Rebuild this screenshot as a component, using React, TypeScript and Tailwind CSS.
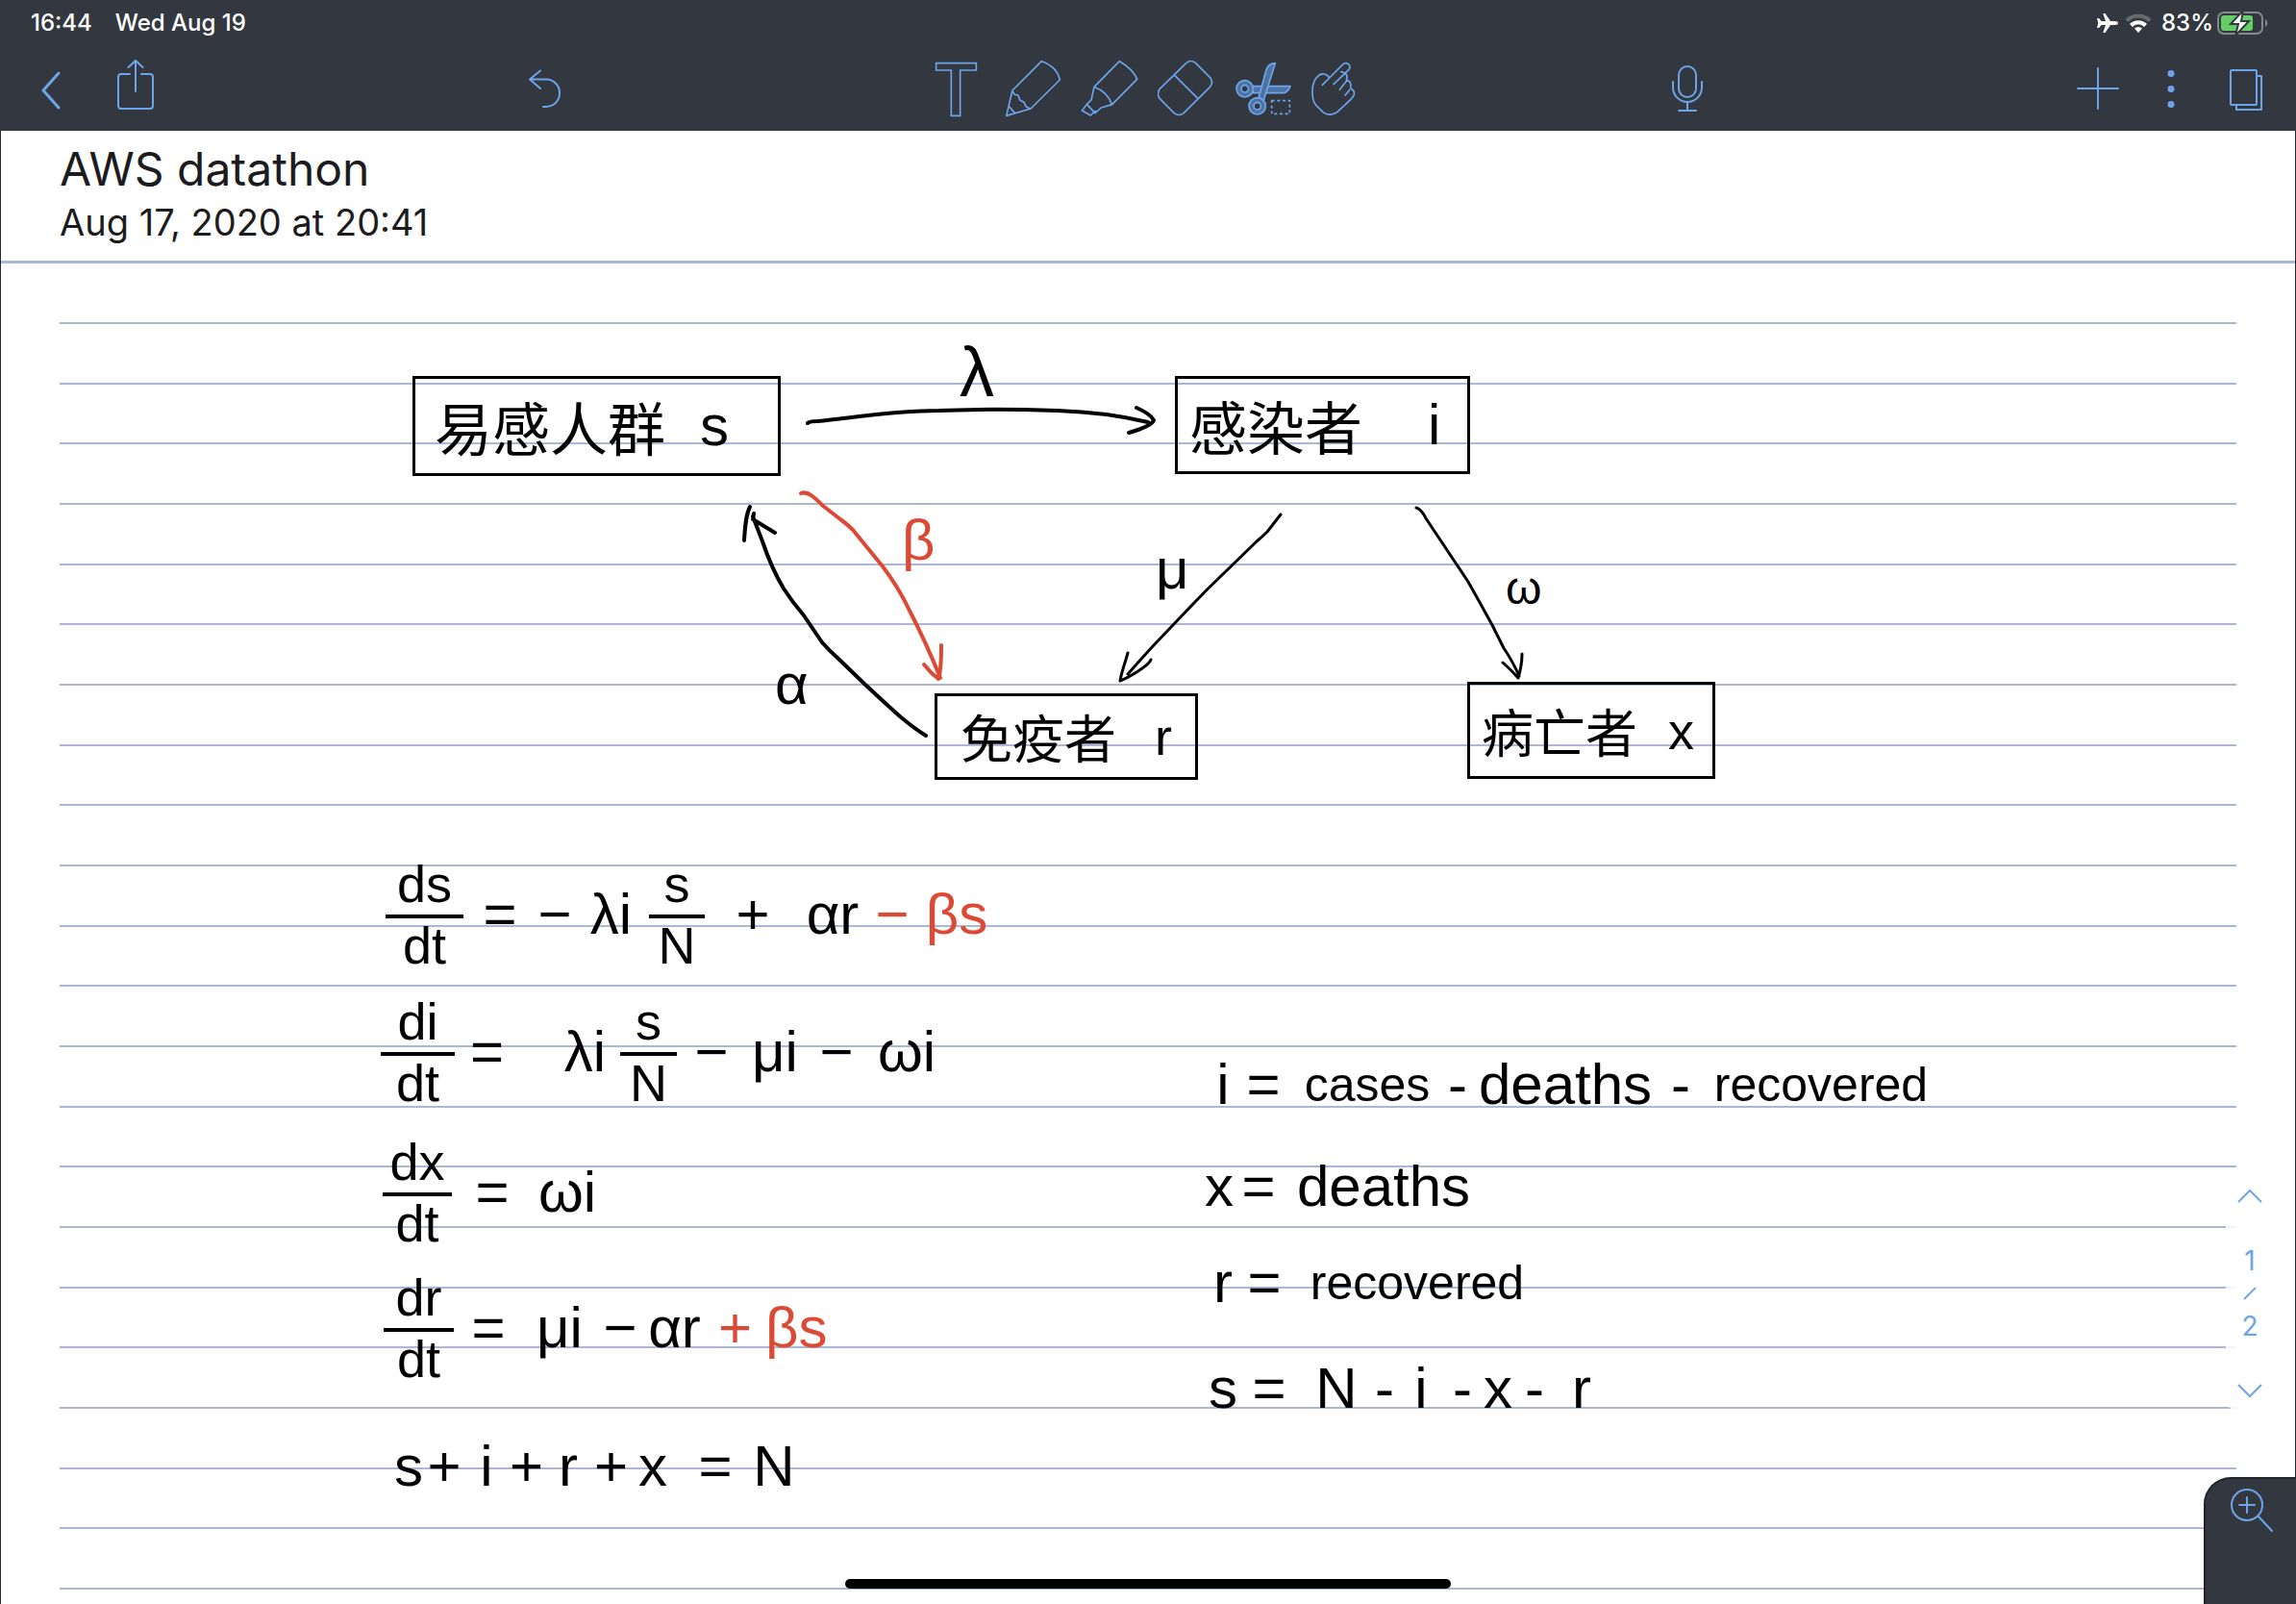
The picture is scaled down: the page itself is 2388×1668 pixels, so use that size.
import type { ReactNode } from "react";

const BLUE = "#6ea4ea";

function Icon({ box, width, label, children }: { box: string; width: string; label: string; children: ReactNode }) {
  return (
    <button type="button" aria-label={label} className="block shrink-0">
      <svg viewBox={box} className={width} fill="none" stroke={BLUE} strokeWidth={2} strokeLinecap="round" strokeLinejoin="round">
        {children}
      </svg>
    </button>
  );
}

function Tool({ box, label, children }: { box: string; label: string; children: ReactNode }) {
  return (
    <button type="button" aria-label={label} className="block shrink-0">
      <svg viewBox={box} className="h-15 w-15" fill="none" stroke={BLUE} strokeWidth={5} strokeLinecap="round" strokeLinejoin="round">
        {children}
      </svg>
    </button>
  );
}

function StatusBar() {
  return (
    <div className="flex h-12 items-center pr-7 pl-8 text-2xl leading-6 font-medium text-white">
      <span>16:44</span>
      <span className="ml-6">Wed Aug 19</span>
      <div className="ml-auto flex items-center">
        <svg viewBox="0 0 24 22" className="h-[22px] w-6" fill="#fff">
          <path d="M23 11c0-1.200-1.600-2-3.200-2H15L9.500 1H7.300L10 9H5.500L3 6H1l1.300 5L1 16h2l2.500-3H10L7.300 21h2.200L15 13h4.800c1.600 0 3.200-.8 3.200-2z" />
        </svg>
        <svg viewBox="0 0 28 20" className="ml-1.5 h-5 w-7" fill="none" strokeWidth={4}>
          <path d="M2 7.500a17 17 0 0 1 24 0" stroke="#666a72" />
          <path d="M6.500 12.500a10.500 10.500 0 0 1 15 0" stroke="#fff" />
          <path d="M14 20l-4-4.500a6 6 0 0 1 8 0z" fill="#fff" />
        </svg>
        <span className="ml-2.5">83%</span>
        <svg viewBox="0 0 54 24" className="ml-1 h-6 w-[54px]">
          <rect x="1" y="1" width="46" height="22" rx="6" fill="none" stroke="#85888e" strokeWidth="2" />
          <rect x="4" y="4" width="33" height="16" rx="3" fill="#65cf65" />
          <path d="M50 8c3 1.500 3 6.500 0 8z" fill="#85888e" />
          <path d="M27 -1L14 13h8l-3 12 14-15h-8z" fill="#fff" stroke="#333740" strokeWidth="2" />
        </svg>
      </div>
    </div>
  );
}

function Toolbar() {
  return (
    <div className="grid h-22 grid-cols-[1fr_auto_1fr] items-center">
      <div className="flex items-center pl-8">
        <Icon box="32 62 40 60" width="h-15 w-10" label="Back">
          <path d="M61 76L45 94l16 18" strokeWidth={3} />
        </Icon>
        <div className="ml-10">
          <Icon box="112 62 60 60" width="h-15 w-15" label="Share">
            <path d="M135 77h-9q-3 0-3 3v30q0 3 3 3h30q3 0 3-3V80q0-3-3-3h-9M141 95V63M133.500 70l7.500-7 7.500 7" />
          </Icon>
        </div>
        <div className="mr-[370px] ml-auto">
          <Icon box="540 62 54 60" width="h-15 w-[54px]" label="Undo">
            <path d="M562 73.500L551 82.500l11 9.500M552 82.500h16a14 14 0 0 1 14 14.500 14 14 0 0 1-14 14h-3" />
          </Icon>
        </div>
      </div>
      <div className="flex gap-5">
        <Tool box="72 66 180 180" label="Text">
          <path d="M101 77h125v22h-50v142h-28V99h-47z" strokeLinejoin="miter" />
        </Tool>
        <Tool box="312 66 180 180" label="Pen">
          <path d="M430 71L339 162 320 241 396 219 487 129Q478 88 430 71zM339 164l7 11 11 2 5 15 13 7 6 13 14 7M328 212l18 20" />
        </Tool>
        <Tool box="552 66 180 180" label="Highlighter">
          <path d="M673 71L594 151l-9 41-14 13 26 28 19-17 34-10 78-79Q716 96 673 71zM594 151q41 16 55 54M571 206l-15 19 27 15 14-14" />
        </Tool>
        <Tool box="792 66 180 180" label="Eraser">
          <path d="M881 77q15-13 30 0l44 44q13 16 0 31l-81 80q-15 13-31 0l-44-44q-12-15 0-31zM846 116l69 69" />
        </Tool>
        <Tool box="1032 66 180 180" label="Select and cut">
          <path fill="#4f73a3" d="M1090 149H1206q-8 20-21 21H1090z" />
          <path fill="#4f73a3" d="M1159 77q-24 2-29 24l-23 84 16 8z" />
          <circle cx="1064" cy="157" r="19" stroke="#4f73a3" strokeWidth="16" />
          <circle cx="1103" cy="211" r="19" stroke="#4f73a3" strokeWidth="16" />
          <circle cx="1064" cy="157" r="26" />
          <circle cx="1103" cy="211" r="26" />
          <circle cx="1064" cy="157" r="11" />
          <circle cx="1103" cy="211" r="11" />
          <path d="M1148 194h56v41h-56z" strokeDasharray="9 8" strokeLinecap="butt" />
        </Tool>
        <Tool box="1272 66 180 180" label="Hand">
          <path d="M1306 145l22-22c-8-14-24-16-34-7-13 11-18 25-19 44 0 27 2 37 12 49l21 21c14 11 33 9 45-1l44-41c12-12 12-25-3-33 4-15-4-25-13-24 6-16-2-26-16-27M1328 123l41-41c12-12 30 2 20 15l-48 46M1360 160l22-28M1377 177l14-16" />
        </Tool>
      </div>
      <div className="flex items-center gap-7 pr-[22px]">
        <div className="mr-auto ml-[301px]">
          <Icon box="1725 62 60 60" width="h-15 w-15" label="Record">
            <rect x="1746" y="69" width="18" height="32" rx="9" />
            <path d="M1740 85v6a15 15 0 0 0 30 0v-6M1755 107v8M1746 115h18" />
          </Icon>
        </div>
        <Icon box="2150 62 60 60" width="h-15 w-15" label="Add">
          <path d="M2182 71v42M2161 92h42" />
        </Icon>
        <Icon box="2238 62 40 60" width="h-15 w-10" label="More">
          <g fill={BLUE} stroke="none">
            <circle cx="2258" cy="76.500" r="3.500" />
            <circle cx="2258" cy="92.500" r="3.500" />
            <circle cx="2258" cy="108.500" r="3.500" />
          </g>
        </Icon>
        <Icon box="2306 62 60 60" width="h-15 w-15" label="Pages">
          <rect x="2320" y="73" width="27" height="36" rx="1" />
          <path d="M2347 79h5v35h-26v-5" />
        </Icon>
      </div>
    </div>
  );
}

function Frac({ top, bottom }: { top: string; bottom: string }) {
  return (
    <span className="flex flex-col text-center text-[54px] leading-14">
      <span className="border-b-4 border-black pb-1">{top}</span>
      <span>{bottom}</span>
    </span>
  );
}

function Row({ at, children }: { at: string; children: ReactNode }) {
  return <div className={"absolute grid items-center text-center leading-15 whitespace-nowrap " + at}>{children}</div>;
}

const RED = "text-[#dc4a35]";

function Node({ at, text, symbol }: { at: string; text: string; symbol: string }) {
  return (
    <div className={"absolute flex items-center border-3 border-black leading-15 whitespace-nowrap " + at}>
      <span className="font-['Noto_Sans_CJK_SC',sans-serif]">{text}</span>
      <span>{symbol}</span>
    </div>
  );
}

function Ink() {
  return (
    <div className="absolute inset-0 font-['Liberation_Sans',sans-serif] text-6xl text-black">
      <svg viewBox="0 0 2388 1668" className="absolute top-0 left-0 h-[1668px] w-[2388px]" fill="none" stroke="#000" strokeWidth={4} strokeLinecap="round" strokeLinejoin="round">
        <path d="M840 440Q842 438 850 438C890 434 930 427 976 427C1020 425 1070 426 1100 427C1130 428 1165 432 1194 439M1182 424Q1196 430 1200 437Q1198 443 1174 450" />
        <path d="M963 765Q950 757 936 745Q918 729 900 712L872 685Q862 676 855 668L836 640Q824 626 815 612Q802 590 793 563L783 537M774 562C775 545 776 535 780 527M784 534L783 540L806 554" />
        <path d="M1332 535L1318 553Q1313 558 1307 563L1272 597Q1256 612 1240 629L1199 672Q1188 684 1173 701M1173 679C1170 690 1166 700 1165 708C1175 704 1195 692 1197 686" strokeWidth={3} />
        <path d="M1473 528Q1478 529 1483 539L1499 563L1527 605Q1540 628 1552 650L1564 674Q1573 687 1580 703M1563 689Q1572 697 1579 705Q1583 692 1583 680" strokeWidth={3} />
        <path d="M833 513C840 510 848 518 856 526L874 540Q881 545 887 551L918 589Q934 610 945 633C960 662 970 685 978 705M979 671C979 685 978 700 976 706Q968 700 961 691" stroke="#dc4a35" />
      </svg>

      <Node at="top-[391px] left-[429px] h-[104px] w-[383px] gap-9 pl-5" text="易感人群" symbol="s" />
      <Node at="top-[391px] left-[1222px] h-[102px] w-[307px] gap-17 pl-3" text="感染者" symbol="i" />
      <Node at="top-[721px] left-[972px] h-[90px] w-[274px] gap-10 pl-6 text-[54px]" text="免疫者" symbol="r" />
      <Node at="top-[709px] left-[1526px] h-[101px] w-[258px] gap-8 pl-3 text-[54px]" text="病亡者" symbol="x" />

      <span className="absolute top-[357px] left-[998px] text-7xl leading-15">λ</span>
      <span className={"absolute top-[532px] left-[938px] text-6xl leading-15 " + RED}>β</span>
      <span className="absolute top-[682px] left-[806px] leading-15">α</span>
      <span className="absolute top-[562px] left-[1202px] text-6xl leading-15">μ</span>
      <span className="absolute top-[582px] left-[1566px] text-5xl leading-15">ω</span>

      <Row at="top-[891px] left-[401px] grid-cols-[81px_76px_38px_79px_58px_100px_66px_58px_76px]">
        <Frac top="ds" bottom="dt" />
        <span>=</span>
        <span>−</span>
        <span>λi</span>
        <Frac top="s" bottom="N" />
        <span>+</span>
        <span>αr</span>
        <span className={RED}>−</span>
        <span className={RED}>βs</span>
      </Row>
      <Row at="top-[1034px] left-[396px] grid-cols-[77px_67px_105px_59px_72px_60px_68px_78px]">
        <Frac top="di" bottom="dt" />
        <span>=</span>
        <span className="pl-8">λi</span>
        <Frac top="s" bottom="N" />
        <span>−</span>
        <span>μi</span>
        <span>−</span>
        <span>ωi</span>
      </Row>
      <Row at="top-[1180px] left-[398px] grid-cols-[72px_84px_72px]">
        <Frac top="dx" bottom="dt" />
        <span>=</span>
        <span>ωi</span>
      </Row>
      <Row at="top-[1321px] left-[399px] grid-cols-[73px_72px_76px_50px_63px_63px_40px]">
        <Frac top="dr" bottom="dt" />
        <span>=</span>
        <span>μi</span>
        <span>−</span>
        <span>αr</span>
        <span className={RED}>+</span>
        <span className={RED}>βs</span>
      </Row>
      <Row at="top-[1495px] left-[408px] grid-cols-[34px_40px_48px_34px_54px_32px_58px_72px_50px]">
        <span>s</span>
        <span>+</span>
        <span>i</span>
        <span>+</span>
        <span>r</span>
        <span>+</span>
        <span>x</span>
        <span>=</span>
        <span>N</span>
      </Row>

      <Row at="top-[1098px] left-[1254px] grid-cols-[36px_48px_168px_18px_208px_32px_260px]">
        <span>i</span>
        <span>=</span>
        <span className="text-[50px]">cases</span>
        <span>-</span>
        <span>deaths</span>
        <span>-</span>
        <span className="text-[50px]">recovered</span>
      </Row>
      <Row at="top-[1204px] left-[1250px] grid-cols-[36px_46px_214px]">
        <span>x</span>
        <span>=</span>
        <span>deaths</span>
      </Row>
      <Row at="top-[1304px] left-[1254px] grid-cols-[36px_50px_268px]">
        <span>r</span>
        <span>=</span>
        <span className="text-[50px]">recovered</span>
      </Row>
      <Row at="top-[1414px] left-[1254px] grid-cols-[36px_60px_80px_16px_64px_22px_52px_24px_74px]">
        <span>s</span>
        <span>=</span>
        <span>N</span>
        <span>-</span>
        <span>i</span>
        <span>-</span>
        <span>x</span>
        <span>-</span>
        <span>r</span>
      </Row>
    </div>
  );
}

function PageNav() {
  return (
    <nav aria-label="Pages" className="absolute top-[1219px] right-[23px] flex h-[248px] w-[50px] flex-col items-center rounded-xl bg-white/85 pt-4 pb-3 text-[28px] leading-9 text-[#6ea4ea]">
      <button type="button" aria-label="Previous page">
        <svg viewBox="0 0 28 18" className="h-[18px] w-7" fill="none" stroke={BLUE} strokeWidth={2}>
          <path d="M2 15L14 3l12 12" />
        </svg>
      </button>
      <span className="mt-10">1</span>
      <svg viewBox="0 0 16 16" className="mt-2 h-4 w-4" fill="none" stroke={BLUE} strokeWidth={2}>
        <path d="M2 14L14 2" />
      </svg>
      <span className="mt-2">2</span>
      <button type="button" aria-label="Next page" className="mt-auto">
        <svg viewBox="0 0 28 18" className="h-[18px] w-7" fill="none" stroke={BLUE} strokeWidth={2}>
          <path d="M2 3l12 12L26 3" />
        </svg>
      </button>
    </nav>
  );
}

const rules = Array.from({ length: 21 }, (_, i) => i);

export default function App() {
  return (
    <div className="relative flex min-h-screen flex-col overflow-hidden bg-white font-['Inter',sans-serif]">
      <header className="bg-[#333740]">
        <StatusBar />
        <Toolbar />
      </header>
      <main className="flex-1 border-x border-[#24272c]">
        <div className="border-b-3 border-[#a9b8d6] pt-3 pb-4 pl-[61px] text-[#1c1c1e]">
          <h1 className="text-5xl leading-14">AWS datathon</h1>
          <p className="mt-[3px] text-[38px] leading-12">Aug 17, 2020 at 20:41</p>
        </div>
        <div className="mr-[61px] ml-[61px] grid grid-rows-[63px_1316px]">
          <div className="border-b-2 border-[#a9b8d6]" />
          <div className="grid auto-rows-fr">
            {rules.map((i) => (
              <div key={i} className="border-b-2 border-[#a9b8d6]" />
            ))}
          </div>
        </div>
      </main>
      <Ink />
      <PageNav />
      <div className="absolute right-0 bottom-0 h-[132px] w-24 rounded-tl-[28px] border-t-2 border-l-2 border-[#202429] bg-[#333740] pt-2.5 pl-6">
        <button type="button" aria-label="Zoom in">
          <svg viewBox="0 0 48 48" className="h-12 w-12" fill="none" stroke={BLUE} strokeWidth={2} strokeLinecap="round">
            <circle cx="19" cy="17" r="16" />
            <path d="M31 29l14 15M19 9v16M11 17h16" />
          </svg>
        </button>
      </div>
      <div className="absolute bottom-4 left-1/2 h-2.5 w-[630px] -translate-x-1/2 rounded-full bg-black" />
    </div>
  );
}
